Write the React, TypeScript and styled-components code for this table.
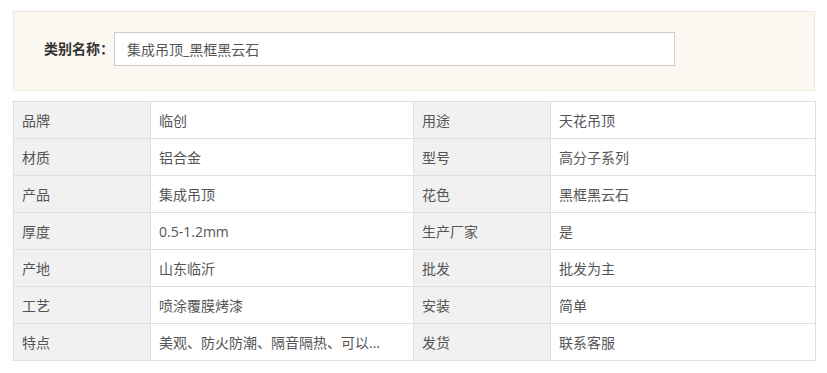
import React from "react";
import styled, { createGlobalStyle } from "styled-components";

const GlobalStyle = createGlobalStyle`
  html, body {
    margin: 0;
    padding: 0;
    background: #ffffff;
    font-family: "Open Sans", "Noto Sans CJK SC", sans-serif;
  }
`;

const Page = styled.div`
  width: 802px;
  padding: 11px 0 0 13px;
`;

const CategoryPanel = styled.div`
  display: flex;
  align-items: center;
  height: 54px;
  padding: 20px 0 4px 30px;
  background: #fbf8f1;
  border: 1px solid #ece7e1;
`;

const CategoryLabel = styled.span`
  width: 70px;
  font-size: 14px;
  font-weight: bold;
  color: #333333;
  white-space: nowrap;
  align-self: flex-start;
  line-height: 34px;
`;

const CategoryInput = styled.input`
  box-sizing: border-box;
  align-self: flex-start;
  width: 561px;
  height: 34px;
  margin: 0;
  padding: 0 12px;
  border: 1px solid #cccccc;
  background: #ffffff;
  font-family: "Open Sans", "Noto Sans CJK SC", sans-serif;
  font-size: 14px;
  color: #555555;
  outline: none;
`;

const SpecTable = styled.table`
  width: 802px;
  margin-top: 10px;
  border-collapse: collapse;
  table-layout: fixed;
`;

const Cell = styled.td<{ $label?: boolean }>`
  height: 36px;
  box-sizing: content-box;
  padding: 0 8px;
  border: 1px solid #dedede;
  background: ${(p) => (p.$label ? "#f1f1f1" : "#ffffff")};
  color: #555555;
  font-size: 14px;
  white-space: nowrap;
  overflow: hidden;
  text-overflow: ellipsis;
`;

const rows: [string, string, string, string][] = [
  ["品牌", "临创", "用途", "天花吊顶"],
  ["材质", "铝合金", "型号", "高分子系列"],
  ["产品", "集成吊顶", "花色", "黑框黑云石"],
  ["厚度", "0.5-1.2mm", "生产厂家", "是"],
  ["产地", "山东临沂", "批发", "批发为主"],
  ["工艺", "喷涂覆膜烤漆", "安装", "简单"],
  ["特点", "美观、防火防潮、隔音隔热、可以...", "发货", "联系客服"],
];

export default function App() {
  return (
    <>
      <GlobalStyle />
      <Page>
        <CategoryPanel>
          <CategoryLabel>类别名称：</CategoryLabel>
          <CategoryInput readOnly value="集成吊顶_黑框黑云石" />
        </CategoryPanel>
        <SpecTable>
          <colgroup>
            <col style={{ width: 137 }} />
            <col style={{ width: 263 }} />
            <col style={{ width: 137 }} />
            <col style={{ width: 265 }} />
          </colgroup>
          <tbody>
            {rows.map((r) => (
              <tr key={r[0]}>
                <Cell $label>{r[0]}</Cell>
                <Cell>{r[1]}</Cell>
                <Cell $label>{r[2]}</Cell>
                <Cell>{r[3]}</Cell>
              </tr>
            ))}
          </tbody>
        </SpecTable>
      </Page>
    </>
  );
}
